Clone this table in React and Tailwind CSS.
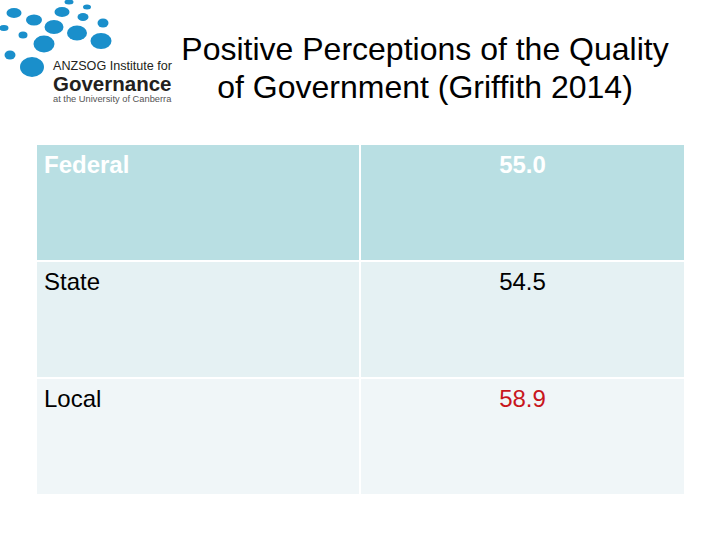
import React from 'react';

// logo dots: cx, cy, rx, ry
const dots = [
  [69, 2, 4.5, 2.5],
  [87, 7, 4, 2.5],
  [14, 13, 7.5, 5],
  [34, 20, 8, 5.5],
  [62, 12, 7.5, 5],
  [83, 17, 5.5, 4],
  [103, 23, 5.5, 4.5],
  [54, 27, 9.5, 7],
  [77, 33, 10, 7.5],
  [101, 41, 10.5, 8],
  [4, 28, 4.5, 3],
  [23, 35, 4.5, 3.5],
  [44, 44, 10.5, 8.5],
  [10, 55, 5.5, 4.5],
  [32, 67, 12, 10],
];

function Logo() {
  return (
    <div className="relative w-[175px] h-[110px] shrink-0">
      <svg className="absolute inset-0" width="175" height="110" viewBox="0 0 175 110">
        {dots.map(([cx, cy, rx, ry], i) => (
          <ellipse key={i} cx={cx} cy={cy} rx={rx} ry={ry} fill="#1a8fcb" />
        ))}
      </svg>
      <div className="relative pl-[53px] pt-[59px] flex flex-col text-[#231f20]">
        <span className="text-[12.6px] leading-[15px] whitespace-nowrap">ANZSOG Institute for</span>
        <span className="text-[20.5px] leading-[20px] font-bold whitespace-nowrap">Governance</span>
        <span className="text-[9.3px] leading-[10px] text-[#555] whitespace-nowrap">at the University of Canberra</span>
      </div>
    </div>
  );
}

const rows = [
  { label: 'Federal', value: '55.0', bg: 'bg-[#b9dfe3]', text: 'text-white font-bold', valueColor: 'text-white font-bold' },
  { label: 'State', value: '54.5', bg: 'bg-[#e5f1f3]', text: 'text-black', valueColor: 'text-black' },
  { label: 'Local', value: '58.9', bg: 'bg-[#f0f6f8]', text: 'text-black', valueColor: 'text-[#c8161d]' },
];

export default function App() {
  return (
    <div className="w-[720px] h-[540px] bg-white font-['Liberation_Sans',Arial,sans-serif] overflow-hidden">
      <div className="flex h-[145px]">
        <Logo />
        <div className="w-[500px] pt-[30px] text-center text-[32px] leading-[38px] text-black">
          <div>Positive Perceptions of the Quality</div>
          <div>of Government (Griffith 2014)</div>
        </div>
      </div>
      <div className="ml-[37px] w-[647px] flex flex-col gap-[2px]">
        {rows.map((r) => (
          <div key={r.label} className="flex gap-[2px] h-[115px]">
            <div className={`w-[322px] ${r.bg} pl-[7px] pt-[8px] text-[24px] leading-[24px] ${r.text}`}>
              {r.label}
            </div>
            <div className={`flex-1 ${r.bg} pt-[8px] text-center text-[24px] leading-[24px] ${r.valueColor}`}>
              {r.value}
            </div>
          </div>
        ))}
      </div>
    </div>
  );
}
